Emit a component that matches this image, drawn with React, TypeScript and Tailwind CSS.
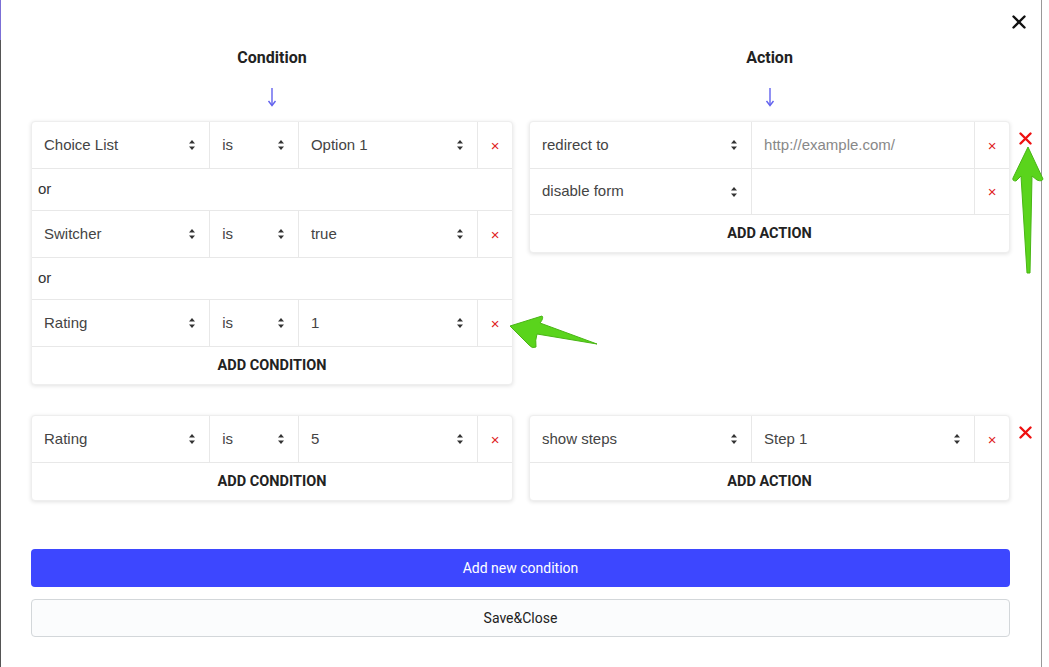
import React from 'react';

const SANS = "font-['Liberation_Sans',Arial,sans-serif]";
const ROBOTO = "font-['Roboto','Liberation_Sans',sans-serif]";

function Chevrons(): JSX.Element {
  return (
    <svg width="8" height="12" viewBox="0 0 8 12" className="shrink-0">
      <path d="M4 1 L7 4.5 H1 Z" fill="#333" />
      <path d="M4 11 L7 7.5 H1 Z" fill="#333" />
    </svg>
  );
}

function DownArrow(): JSX.Element {
  return (
    <svg width="10" height="20" viewBox="0 0 10 20" className="mt-[19px]">
      <path d="M5 1 V18" stroke="#6262ee" strokeWidth="1.4" />
      <path d="M1.5 14 L5 18.5 L8.5 14" stroke="#6262ee" strokeWidth="1.4" fill="none" />
    </svg>
  );
}

function SelectCell({ value, width, last }: { value: string; width: string; last?: boolean }): JSX.Element {
  return (
    <div
      className={`${width} flex items-center justify-between pl-3 pr-[13px] ${last ? '' : 'border-r border-[#e8e8e8]'}`}
    >
      <span className={`${SANS} text-[15px] text-[#444]`}>{value}</span>
      <Chevrons />
    </div>
  );
}

function RemoveCell(): JSX.Element {
  return (
    <div className="w-[34px] flex items-center justify-center">
      <span className={`${SANS} text-[15px] text-[#e02424] leading-none`}>×</span>
    </div>
  );
}

function ConditionRow({ field, op, value }: { field: string; op: string; value: string }): JSX.Element {
  return (
    <div className="flex h-[47px] border-b border-[#e8e8e8]">
      <SelectCell value={field} width="w-[179px]" />
      <SelectCell value={op} width="w-[89px]" />
      <SelectCell value={value} width="w-[180px]" />
      <RemoveCell />
    </div>
  );
}

function OrRow(): JSX.Element {
  return (
    <div className="flex items-center h-[42px] border-b border-[#e8e8e8] px-[6px]">
      <span className={`${SANS} text-[15px] text-[#333]`}>or</span>
    </div>
  );
}

function Card({ children, footer }: { children: React.ReactNode; footer: string }): JSX.Element {
  return (
    <div className="self-start rounded-[4px] border border-[#eeeeee] bg-white shadow-[0_1px_4px_rgba(0,0,0,0.12)]">
      {children}
      <div className="h-[37px] flex items-center justify-center">
        <span className={`${ROBOTO} text-[14.5px] font-bold text-[#222]`}>{footer}</span>
      </div>
    </div>
  );
}

function BigX(): JSX.Element {
  return (
    <svg width="13" height="13" viewBox="0 0 13 13" className="absolute right-[-22px]">
      <path d="M1.5 1.5 L11.5 11.5 M11.5 1.5 L1.5 11.5" stroke="#ee1111" strokeWidth="2.4" strokeLinecap="round" />
    </svg>
  );
}

export default function App(): JSX.Element {
  return (
    <div className="relative w-[1049px] h-[667px] bg-white overflow-hidden">
      <div className="relative w-[1042px] h-[667px] border-l border-r border-l-[#555] border-r-[#999] px-[30px]">
        <div className="absolute left-[-1px] top-0 w-[1px] h-[40px] bg-[#7b6fd6]" />
        <button className="absolute right-[14px] top-[14px] w-[16px] h-[16px] flex items-center justify-center">
          <svg width="14" height="14" viewBox="0 0 14 14">
            <path d="M1.5 1.5 L12.5 12.5 M12.5 1.5 L1.5 12.5" stroke="#111" strokeWidth="2.4" strokeLinecap="round" />
          </svg>
        </button>

        <div className="grid grid-cols-[482px_481px] gap-x-4 pt-[48px]">
          <div className="flex flex-col items-center">
            <h2 className={`${ROBOTO} text-[16px] font-bold text-[#222] leading-[20px]`}>Condition</h2>
            <DownArrow />
          </div>
          <div className="flex flex-col items-center">
            <h2 className={`${ROBOTO} text-[16px] font-bold text-[#222] leading-[20px]`}>Action</h2>
            <DownArrow />
          </div>
        </div>

        <div className="grid grid-cols-[482px_481px] gap-x-4 mt-[14px]">
          <Card footer="ADD CONDITION">
            <ConditionRow field="Choice List" op="is" value="Option 1" />
            <OrRow />
            <ConditionRow field="Switcher" op="is" value="true" />
            <OrRow />
            <ConditionRow field="Rating" op="is" value="1" />
          </Card>
          <div className="relative self-start">
            <Card footer="ADD ACTION">
              <div className="flex h-[47px] border-b border-[#e8e8e8]">
                <SelectCell value="redirect to" width="w-[223px]" />
                <div className="w-[224px] flex items-center pl-3 border-r border-[#e8e8e8]">
                  <span className={`${SANS} text-[15px] text-[#888]`}>http://example.com/</span>
                </div>
                <RemoveCell />
              </div>
              <div className="flex h-[46px] border-b border-[#e8e8e8]">
                <SelectCell value="disable form" width="w-[223px]" />
                <div className="w-[224px] border-r border-[#e8e8e8]" />
                <RemoveCell />
              </div>
            </Card>
            <div className="absolute top-[11px] right-0">
              <BigX />
            </div>
          </div>
        </div>

        <div className="grid grid-cols-[482px_481px] gap-x-4 mt-[30px]">
          <Card footer="ADD CONDITION">
            <ConditionRow field="Rating" op="is" value="5" />
          </Card>
          <div className="relative self-start">
            <Card footer="ADD ACTION">
              <div className="flex h-[47px] border-b border-[#e8e8e8]">
                <SelectCell value="show steps" width="w-[223px]" />
                <SelectCell value="Step 1" width="w-[224px]" />
                <RemoveCell />
              </div>
            </Card>
            <div className="absolute top-[11px] right-0">
              <BigX />
            </div>
          </div>
        </div>

        <div className="flex flex-col gap-3 mt-[48px] w-[979px]">
          <button className={`${ROBOTO} h-[38px] rounded-[4px] bg-[#3d47ff] text-white text-[14px]`}>
            Add new condition
          </button>
          <button
            className={`${ROBOTO} h-[38px] rounded-[4px] bg-[#fbfcfd] border border-[#d3d7da] text-[#222] text-[14px]`}
          >
            Save&amp;Close
          </button>
        </div>
      </div>

      <svg className="absolute inset-0 pointer-events-none" width="1049" height="667" viewBox="0 0 1049 667">
        <path
          d="M510 326 L542 316 Q544 318 540 323 L597 344 L537 334 Q535 340 536 347 Q532 349 529 345 Z"
          fill="#5ad41c"
          stroke="#49b515"
          strokeWidth="1"
          strokeLinejoin="round"
        />
        <path
          d="M1028 147 L1043 179 Q1042 182 1037 180 L1032 176 L1030 273 L1027 273 L1021 176 L1016 181 Q1012 181 1013 178 Z"
          fill="#5ad41c"
          stroke="#49b515"
          strokeWidth="1"
          strokeLinejoin="round"
        />
      </svg>
    </div>
  );
}
